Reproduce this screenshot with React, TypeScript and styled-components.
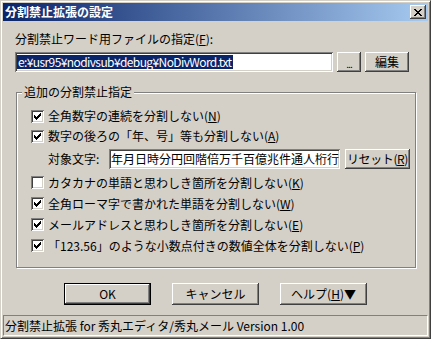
import React from 'react';
import styled, { createGlobalStyle } from 'styled-components';

const colors = {
  face: '#d4d0c8',
  light: '#ffffff',
  shadow: '#808080',
  dark: '#404040',
  select: '#0a246a',
  titleEnd: '#a6caf0',
};

const GlobalStyle = createGlobalStyle`
  html, body {
    margin: 0;
    padding: 0;
    background: ${colors.face};
  }
  body {
    font-family: "Noto Sans CJK JP", "Liberation Sans", sans-serif;
    font-size: 12px;
    line-height: 14px;
    color: #000;
  }
  u {
    text-underline-offset: 1px;
  }
`;

const raised = `
  box-shadow: inset -1px -1px ${colors.dark}, inset 1px 1px ${colors.light},
    inset -2px -2px ${colors.shadow}, inset 2px 2px ${colors.face};
`;

const sunken = `
  box-shadow: inset 1px 1px ${colors.shadow}, inset -1px -1px ${colors.light},
    inset 2px 2px ${colors.dark}, inset -2px -2px ${colors.face};
`;

const Window = styled.div`
  box-sizing: border-box;
  width: 431px;
  height: 339px;
  display: flex;
  flex-direction: column;
  background: ${colors.face};
  border: 1px solid;
  border-color: ${colors.face} ${colors.dark} ${colors.dark} ${colors.face};
  box-shadow: inset 1px 1px ${colors.light}, inset -1px -1px ${colors.shadow};
  padding: 2px;
`;

const TitleBar = styled.div`
  height: 18px;
  flex: none;
  display: flex;
  align-items: center;
  justify-content: space-between;
  padding: 0 2px 0 2px;
  background: linear-gradient(to right, ${colors.select}, ${colors.titleEnd});
`;

const TitleText = styled.span`
  color: #fff;
  font-weight: 700;
  line-height: 14px;
`;

const CloseButton = styled.div`
  box-sizing: border-box;
  width: 16px;
  height: 14px;
  display: flex;
  align-items: center;
  justify-content: center;
  background: ${colors.face};
  ${raised}
`;

const Client = styled.div`
  flex: 1;
  display: flex;
  flex-direction: column;
`;

const FileLabel = styled.div`
  margin: 11px 0 0 12px;
  height: 14px;
`;

const FileRow = styled.div`
  display: flex;
  gap: 4px;
  margin: 6px 0 0 12px;
  height: 20px;
`;

const TextField = styled.div<{ $width: number }>`
  box-sizing: border-box;
  width: ${p => p.$width}px;
  height: 20px;
  padding: 3px 2px 0 2px;
  background: #fff;
  overflow: hidden;
  white-space: nowrap;
  ${sunken}
`;

const Selection = styled.span`
  display: inline-block;
  background: ${colors.select};
  color: #fff;
  padding: 0 1px;
  letter-spacing: -0.6px;
`;

const Button = styled.div<{ $width: number; $height?: number; $default?: boolean }>`
  box-sizing: border-box;
  width: ${p => p.$width}px;
  height: ${p => p.$height ?? 20}px;
  flex: none;
  display: flex;
  align-items: center;
  justify-content: center;
  background: ${colors.face};
  border: ${p => (p.$default ? '1px solid #000' : 'none')};
  white-space: nowrap;
  ${raised}
`;

const ResetButton = styled(Button)`
  margin-left: 5px;
  letter-spacing: -0.4px;
`;

const Dots = styled.span`
  padding-top: 4px;
  letter-spacing: -1px;
  font-size: 10px;
`;

const GroupBox = styled.div`
  position: relative;
  box-sizing: border-box;
  width: 400px;
  height: 176px;
  margin: 20px 0 0 13px;
  padding: 13px 0 0 14px;
  border: 1px solid ${colors.shadow};
  box-shadow: inset 1px 1px ${colors.light}, 1px 1px ${colors.light};
`;

const Legend = styled.span`
  position: absolute;
  top: -8px;
  left: 5px;
  padding: 0 2px;
  background: ${colors.face};
`;

const CheckRow = styled.div<{ $height: number }>`
  display: flex;
  align-items: center;
  gap: 4px;
  height: ${p => p.$height}px;
`;

const CheckBox = styled.span`
  box-sizing: border-box;
  width: 13px;
  height: 13px;
  flex: none;
  display: flex;
  align-items: center;
  justify-content: center;
  background: #fff;
  ${sunken}
`;

const TargetRow = styled.div`
  display: flex;
  align-items: center;
  height: 20px;
  margin: 3px 0;
  padding-left: 17px;
`;

const TargetLabel = styled.span`
  width: 61px;
  flex: none;
`;

const ButtonRow = styled.div`
  display: flex;
  justify-content: center;
  gap: 21px;
  margin-top: 15px;
`;

const StatusBar = styled.div`
  box-sizing: border-box;
  margin-top: auto;
  height: 21px;
  display: flex;
  align-items: center;
  padding-left: 1px;
  border: 1px solid;
  border-color: ${colors.shadow} ${colors.light} ${colors.light} ${colors.shadow};
`;

// pixel glyphs, one string per row, '#' = black pixel
const CHECK = ['......#', '.....##', '#...###', '##.###.', '#####..', '.###...', '..#....'];
const CROSS = ['##....##', '.##..##.', '..####..', '...##...', '..####..', '.##..##.', '##....##'];

const PixelGlyph: React.FC<{ rows: string[] }> = ({ rows }) => (
  <svg width={rows[0].length} height={rows.length} shapeRendering="crispEdges">
    {rows.flatMap((row, y) =>
      row.split('').map((c, x) => (c === '#' ? <rect key={`${x}-${y}`} x={x} y={y} width={1} height={1} fill="#000" /> : null))
    )}
  </svg>
);

const Check: React.FC<{ checked: boolean; height?: number; children: React.ReactNode }> = ({ checked, height = 20, children }) => (
  <CheckRow $height={height}>
    <CheckBox>{checked && <PixelGlyph rows={CHECK} />}</CheckBox>
    <span>{children}</span>
  </CheckRow>
);

export default function App() {
  return (
    <>
      <GlobalStyle />
      <Window>
        <TitleBar>
          <TitleText>分割禁止拡張の設定</TitleText>
          <CloseButton>
            <PixelGlyph rows={CROSS} />
          </CloseButton>
        </TitleBar>
        <Client>
          <FileLabel>
            分割禁止ワード用ファイルの指定(<u>F</u>):
          </FileLabel>
          <FileRow>
            <TextField $width={318}>
              <Selection>e:¥usr95¥nodivsub¥debug¥NoDivWord.txt</Selection>
            </TextField>
            <Button $width={24}>
              <Dots>...</Dots>
            </Button>
            <Button $width={44}>編集</Button>
          </FileRow>

          <GroupBox>
            <Legend>追加の分割禁止指定</Legend>
            <Check checked>
              全角数字の連続を分割しない(<u>N</u>)
            </Check>
            <Check checked>
              数字の後ろの「年、号」等も分割しない(<u>A</u>)
            </Check>
            <TargetRow>
              <TargetLabel>対象文字:</TargetLabel>
              <TextField $width={231}>年月日時分円回階倍万千百億兆件通人桁行</TextField>
              <ResetButton $width={65}>
                リセット(<u>R</u>)
              </ResetButton>
            </TargetRow>
            <Check checked={false} height={21}>
              カタカナの単語と思わしき箇所を分割しない(<u>K</u>)
            </Check>
            <Check checked height={21}>
              全角ローマ字で書かれた単語を分割しない(<u>W</u>)
            </Check>
            <Check checked height={21}>
              メールアドレスと思わしき箇所を分割しない(<u>E</u>)
            </Check>
            <Check checked height={21}>
              「123.56」のような小数点付きの数値全体を分割しない(<u>P</u>)
            </Check>
          </GroupBox>

          <ButtonRow>
            <Button $width={87} $height={22} $default>
              OK
            </Button>
            <Button $width={87} $height={22}>
              キャンセル
            </Button>
            <Button $width={87} $height={22}>
              ヘルプ(<u>H</u>)▼
            </Button>
          </ButtonRow>

          <StatusBar>分割禁止拡張 for 秀丸エディタ/秀丸メール Version 1.00</StatusBar>
        </Client>
      </Window>
    </>
  );
}
